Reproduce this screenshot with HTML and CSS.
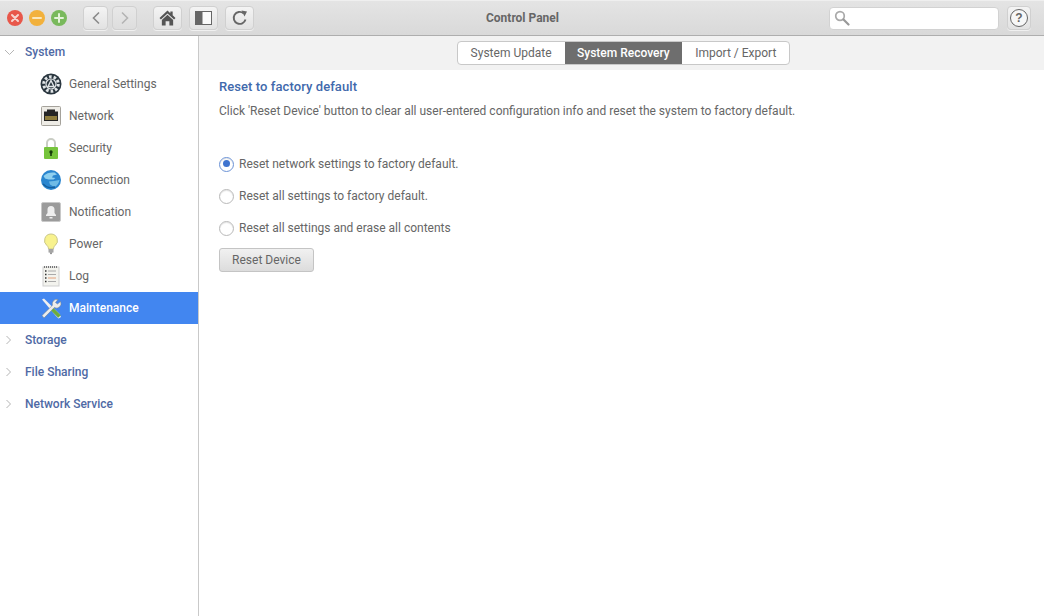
FILE: index.html
```html
<!DOCTYPE html>
<html lang="en">
<head>
<meta charset="utf-8">
<title>Control Panel</title>
<link rel="stylesheet" href="styles.css">
</head>
<body>
<div class="window">
  <header class="titlebar">
    <div class="lights">
      <svg class="light" viewBox="0 0 16 16"><circle cx="8" cy="8" r="8" fill="#e8574a"/><path d="M5 5l6 6M11 5l-6 6" stroke="#f6d5cf" stroke-width="2" stroke-linecap="round"/></svg>
      <svg class="light" viewBox="0 0 16 16"><circle cx="8" cy="8" r="8" fill="#f2b13c"/><path d="M4 8h8" stroke="#fbe7bb" stroke-width="2" stroke-linecap="round"/></svg>
      <svg class="light" viewBox="0 0 16 16"><circle cx="8" cy="8" r="8" fill="#79b95c"/><path d="M4 8h8M8 4v8" stroke="#e3f2d9" stroke-width="2" stroke-linecap="round"/></svg>
    </div>
    <div class="nav-group">
      <button class="tool tool-nav"><svg width="10" height="14" viewBox="0 0 10 14"><path d="M8 1.500L2.500 7 8 12.500" fill="none" stroke="#8a8a8a" stroke-width="1.600"/></svg></button>
      <button class="tool tool-nav tool-off"><svg width="10" height="14" viewBox="0 0 10 14"><path d="M2 1.500L7.500 7 2 12.500" fill="none" stroke="#b4b4b4" stroke-width="1.600"/></svg></button>
    </div>
    <div class="action-group">
      <button class="tool tool-wide"><svg width="17" height="16" viewBox="0 0 18 17"><path d="M9 0.500L0.500 8.500 2 10l7-6.400L16 10l1.500-1.500-3-2.800V1.500h-2.500v1.900z" fill="#555"/><path d="M3 10.500L9 5l6 5.500V16.500h-4v-4.500H7v4.500H3z" fill="#555"/></svg></button>
      <button class="tool tool-wide"><svg width="17" height="14" viewBox="0 0 17 14"><rect x="0.500" y="0.500" width="16" height="13" fill="#fafafa" stroke="#666"/><rect x="0.500" y="0.500" width="7" height="13" fill="#666"/></svg></button>
      <button class="tool tool-wide"><svg width="16" height="16" viewBox="0 0 16 16"><path d="M13.500 9.500A6 6 0 1 1 11.500 3.200" fill="none" stroke="#666" stroke-width="1.900"/><path d="M9.500 0.500L15 1.500 12.500 6.500z" fill="#666"/></svg></button>
    </div>
    <h1 class="title">Control Panel</h1>
    <div class="search">
      <svg width="16" height="16" viewBox="0 0 16 16"><circle cx="6" cy="6" r="4.300" fill="#fff" stroke="#a9a9a9" stroke-width="1.700"/><path d="M9.500 9.500L14.500 14.500" stroke="#999" stroke-width="2.200" stroke-linecap="round"/></svg>
    </div>
    <button class="tool tool-help"><span class="help-ring">?</span></button>
  </header>
  <div class="body">
    <nav class="sidebar">
      <div class="group-row">
        <svg class="chev" width="12" height="12" viewBox="0 0 12 12"><path d="M2 4l4.500 4.500L11 4" fill="none" stroke="#b5b5b5"/></svg>
        <span>System</span>
      </div>
      <div class="item">
        <svg class="icon" viewBox="0 0 22 22"><circle cx="11" cy="11" r="10.500" fill="#2b3740"/><circle cx="11" cy="11" r="7.300" fill="none" stroke="#e2e6e8" stroke-width="3" stroke-dasharray="2.600 2"/><circle cx="11" cy="11" r="5.600" fill="#e2e6e8"/><circle cx="11" cy="11" r="4.400" fill="#2b3740"/><path d="M11 7.500L8 13.500h6z" fill="none" stroke="#e2e6e8" stroke-width="1.400"/></svg>
        <span>General Settings</span>
      </div>
      <div class="item">
        <svg class="icon" viewBox="0 0 22 22"><rect x="1.500" y="1.500" width="19" height="19" rx="1" fill="#eeece6" stroke="#a5a29b"/><path d="M7 4.500h8v2h3V16H4V6.500h3z" fill="#252525"/><rect x="5" y="11" width="12" height="4" fill="#8d7b3c"/></svg>
        <span>Network</span>
      </div>
      <div class="item">
        <svg class="icon" viewBox="0 0 22 22"><path d="M7 11V6a4 4 0 0 1 8 0v5" fill="none" stroke="#c9cdc4" stroke-width="2"/><rect x="4" y="10" width="14" height="12" rx="1" fill="#76c43c"/><circle cx="11" cy="15" r="1.700" fill="#163a0a"/><rect x="10.200" y="15" width="1.600" height="4" fill="#163a0a"/></svg>
        <span>Security</span>
      </div>
      <div class="item">
        <svg class="icon" viewBox="0 0 22 22"><circle cx="11" cy="11" r="10" fill="#2a86cf"/><path d="M3.500 7c3-3 7-4 11-3.500l2.500 2-4 1-1 2 3.500 .5-2 1.500H8.500L5 9.500z" fill="#8fd0ef"/><path d="M9 12.500c3-.5 7-.5 10.500-1.500-.5 3-2 5-4 6.500l-3-.5-2.500-1.500z" fill="#6fbbe6"/><path d="M3 15c3 3 8 4.500 12 3" fill="none" stroke="#155f9e" stroke-width="1.500"/></svg>
        <span>Connection</span>
      </div>
      <div class="item">
        <svg class="icon" viewBox="0 0 22 22"><rect x="1.500" y="1.500" width="19" height="19" rx="1.500" fill="#9b9b9b" stroke="#c8c8c8"/><path d="M11 5a3.500 3.500 0 0 1 3.500 3.500V12l1.500 2v1H6v-1l1.500-2V8.500A3.500 3.500 0 0 1 11 5z" fill="#eeeeee"/><rect x="9.500" y="16" width="3" height="1.500" fill="#eee"/></svg>
        <span>Notification</span>
      </div>
      <div class="item">
        <svg class="icon" viewBox="0 0 22 22"><path d="M11 1a6.500 6.500 0 0 0-4 11.600c1 1 1.500 2 1.500 3.400h5c0-1.400.5-2.400 1.500-3.400A6.500 6.500 0 0 0 11 1z" fill="#f8f28e" stroke="#c9c78c"/><rect x="8.500" y="16" width="5" height="3.500" fill="#a5a5a5"/><path d="M9.500 19.500h3L11 21.500z" fill="#777"/></svg>
        <span>Power</span>
      </div>
      <div class="item">
        <svg class="icon" viewBox="0 0 22 22"><rect x="3" y="2" width="16" height="19" fill="#f3f3ee" stroke="#cfcfcf"/><path d="M4 2h14" stroke="#777" stroke-dasharray="1 1" stroke-width="2"/><path d="M5 6h1.500M5 9.500h1.500M5 13h1.500M5 16.500h1.500" stroke="#333" stroke-width="1.500"/><path d="M8 6h8M8 9.500h8" stroke="#aaa"/><path d="M8 13h8" stroke="#e3a27c"/><path d="M8 16.500h8" stroke="#aaa"/></svg>
        <span>Log</span>
      </div>
      <div class="item item-active">
        <svg class="icon" viewBox="0 0 22 22"><path d="M2 2.500L4 1.500 19 16.500 21 20 18.500 21.500 16 19z" fill="#f0f0f0"/><path d="M11 11L19.500 19.500" stroke="#6dab3e" stroke-width="3.500"/><path d="M20.500 4.500l-3 2.500-2-1.500L18 2.500a4.500 4.500 0 0 0-5.500 5.800L2 18.500 4 21 14.300 10.500A4.500 4.500 0 0 0 20.500 4.500z" fill="#ececec" stroke="#6e7a80" stroke-width=".5"/></svg>
        <span>Maintenance</span>
      </div>
      <div class="group-row">
        <svg class="chev" width="12" height="12" viewBox="0 0 12 12"><path d="M3.500 2l4 4-4 4" fill="none" stroke="#b5b5b5"/></svg>
        <span>Storage</span>
      </div>
      <div class="group-row">
        <svg class="chev" width="12" height="12" viewBox="0 0 12 12"><path d="M3.500 2l4 4-4 4" fill="none" stroke="#b5b5b5"/></svg>
        <span>File Sharing</span>
      </div>
      <div class="group-row">
        <svg class="chev" width="12" height="12" viewBox="0 0 12 12"><path d="M3.500 2l4 4-4 4" fill="none" stroke="#b5b5b5"/></svg>
        <span>Network Service</span>
      </div>
    </nav>
    <main class="content">
      <div class="tabbar">
        <div class="tabs">
          <span class="tab">System Update</span>
          <span class="tab tab-active">System Recovery</span>
          <span class="tab">Import / Export</span>
        </div>
      </div>
      <section class="panel">
        <h2 class="heading">Reset to factory default</h2>
        <p class="desc">Click 'Reset Device' button to clear all user-entered configuration info and reset the system to factory default.</p>
        <div class="options">
          <div class="option"><span class="radio radio-on"></span><span>Reset network settings to factory default.</span></div>
          <div class="option"><span class="radio"></span><span>Reset all settings to factory default.</span></div>
          <div class="option"><span class="radio"></span><span>Reset all settings and erase all contents</span></div>
        </div>
        <button class="reset">Reset Device</button>
      </section>
    </main>
  </div>
</div>
</body>
</html>
```
FILE: styles.css
```css
* { box-sizing: border-box; }
html, body { margin: 0; height: 100%; }
body { font-family: Roboto, "Liberation Sans", sans-serif; font-size: 12px; color: #666; background: #fff; overflow: hidden; }
.window { display: flex; flex-direction: column; height: 616px; width: 1044px; }
.titlebar { flex: 0 0 36px; display: flex; align-items: center; position: relative; padding: 0 0 0 7px; background: linear-gradient(#e4e4e4, #d9d9d9); border-bottom: 1px solid #aeaeae; border-top: 1px solid #efefef; }
.lights { display: flex; gap: 6px; }
.light { width: 16px; height: 16px; display: block; }
.nav-group { display: flex; gap: 4px; margin-left: 16px; }
.action-group { display: flex; gap: 7px; margin-left: 16px; }
.tool { display: flex; align-items: center; justify-content: center; padding: 0; height: 24px; border: 1px solid #d0d0d0; border-radius: 4px; background: linear-gradient(#f4f4f4, #e2e2e2); box-shadow: 0 1px 0 #f0f0f0; }
.tool-nav { width: 25px; }
.tool-off { background: linear-gradient(#e8e8e8, #dddddd); }
.tool-wide { width: 29px; }
.title { position: absolute; left: 1px; right: 0; top: 10px; margin: 0; text-align: center; font-size: 12px; line-height: 14px; font-weight: 700; color: #666; pointer-events: none; }
.search { margin-left: auto; width: 170px; height: 23px; background: #fff; border: 1px solid #d2d2d2; border-radius: 4px; padding: 2px 0 0 4px; }
.search svg { display: block; }
.tool-help { width: 24px; height: 24px; margin: 0 13px 0 8px; }
.help-ring { width: 18px; height: 18px; border: 1.500px solid #666; border-radius: 50%; display: flex; align-items: center; justify-content: center; font-size: 12px; font-weight: 700; color: #666; background: #f7f7f7; }
.body { flex: 1; display: flex; min-height: 0; }
.sidebar { flex: 0 0 199px; border-right: 1px solid #c9c9c9; background: #fff; }
.group-row { height: 32px; display: flex; align-items: center; padding-left: 3px; color: #4f6aa5; font-weight: 500; }
.chev { flex: none; margin-right: 10px; }
.item { height: 32px; display: flex; align-items: center; padding-left: 40px; }
.icon { width: 22px; height: 22px; flex: none; margin-right: 7px; }
.item-active { background: #4286f0; color: #fff; font-weight: 500; }
.content { flex: 1; min-width: 0; display: flex; flex-direction: column; }
.tabbar { flex: 0 0 34px; background: #f2f2f2; display: flex; justify-content: center; padding: 5px 0 0 4px; }
.tabs { display: flex; height: 24px; border: 1px solid #c8c8c8; border-radius: 4px; background: #fff; overflow: hidden; }
.tab { display: flex; align-items: center; padding: 0 13px; color: #666; }
.tab-active { background: #6e6e6e; color: #fff; font-weight: 500; padding: 0 12.500px; }
.panel { padding: 9px 20px; }
.heading { margin: 0; font-size: 13px; line-height: 16px; font-weight: 500; letter-spacing: .08px; color: #4169ac; }
.desc { margin: 8px 0 0; line-height: 16px; }
.options { margin-top: 29px; }
.option { height: 32px; display: flex; align-items: center; gap: 5px; }
.radio { width: 15px; height: 15px; border-radius: 50%; border: 1px solid #b9b9b9; background: #fff; flex: none; box-shadow: inset 0 1px 1px #e4e4e4; }
.radio-on { border: 1.500px solid #6c93d6; position: relative; }
.radio-on::after { content: ""; position: absolute; left: 2.500px; top: 2.500px; width: 7px; height: 7px; border-radius: 50%; background: #3f74cf; }
.reset { display: block; margin-top: 4px; width: 95px; height: 24px; padding: 0; border: 1px solid #c4c4c4; border-radius: 3px; background: linear-gradient(#f1f1f1, #dcdcdc); font: inherit; color: #666; }
```
